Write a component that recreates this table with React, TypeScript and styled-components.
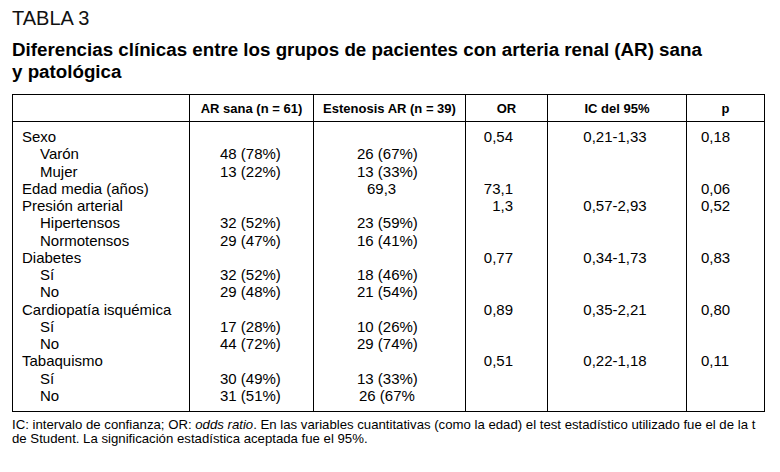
import styled, { createGlobalStyle } from "styled-components";

const GlobalStyle = createGlobalStyle`
  body {
    margin: 0;
    background: #ffffff;
    color: #000;
    font-family: "Liberation Sans", Arial, sans-serif;
  }
`;

const PageStyle = styled.div`
  width: 752px;
  padding: 6px 12px 0 12px;
`;

const TableLabel = styled.div`
  font-size: 20px;
  line-height: 24px;
  color: #111;
`;

const Heading = styled.h2`
  margin: 9px 0 0 0;
  font-size: 18.75px;
  line-height: 22px;
  font-weight: bold;
`;

const TableStyle = styled.table`
  margin-top: 11px;
  border-collapse: collapse;
  table-layout: fixed;
  width: 753px;
`;

const HeadCell = styled.th`
  border: 1px solid #000;
  height: 26px;
  padding: 0;
  font-size: 13px;
  font-weight: bold;
  text-align: center;
  vertical-align: middle;
`;

const BodyCell = styled.td<{ $align?: string; $padL?: number; $padR?: number }>`
  border: 1px solid #000;
  padding: 6px ${(p) => p.$padR ?? 0}px 7px ${(p) => p.$padL ?? 0}px;
  vertical-align: top;
  text-align: ${(p) => p.$align ?? "left"};
  font-size: 15px;
`;

const Line = styled.div<{ $indent?: number }>`
  height: 17.27px;
  line-height: 17.27px;
  padding-left: ${(p) => p.$indent ?? 0}px;
  white-space: nowrap;
`;

const Footnote = styled.div`
  margin-top: 6px;
  font-size: 13.2px;
  line-height: 14px;
  white-space: nowrap;

  em {
    font-style: italic;
  }
`;

type TLine = { text: string; indent?: number };

const rows: TLine[] = [
  { text: "Sexo" },
  { text: "Varón", indent: 18 },
  { text: "Mujer", indent: 18 },
  { text: "Edad media (años)" },
  { text: "Presión arterial" },
  { text: "Hipertensos", indent: 18 },
  { text: "Normotensos", indent: 18 },
  { text: "Diabetes" },
  { text: "Sí", indent: 18 },
  { text: "No", indent: 18 },
  { text: "Cardiopatía isquémica" },
  { text: "Sí", indent: 18 },
  { text: "No", indent: 18 },
  { text: "Tabaquismo" },
  { text: "Sí", indent: 18 },
  { text: "No", indent: 18 },
];

const sana = ["", "48 (78%)", "13 (22%)", "", "", "32 (52%)", "29 (47%)", "", "32 (52%)", "29 (48%)", "", "17 (28%)", "44 (72%)", "", "30 (49%)", "31 (51%)"];
const estenosis: TLine[] = [
  { text: "" }, { text: "26 (67%)" }, { text: "13 (33%)" }, { text: "69,3", indent: 10 }, { text: "" },
  { text: "23 (59%)" }, { text: "16 (41%)" }, { text: "" }, { text: "18 (46%)" }, { text: "21 (54%)" },
  { text: "" }, { text: "10 (26%)" }, { text: "29 (74%)" }, { text: "" }, { text: "13 (33%)" },
  { text: "26 (67%", indent: 2 },
];
const or = ["0,54", "", "", "73,1", "1,3", "", "", "0,77", "", "", "0,89", "", "", "0,51", "", ""];
const ic = ["0,21-1,33", "", "", "", "0,57-2,93", "", "", "0,34-1,73", "", "", "0,35-2,21", "", "", "0,22-1,18", "", ""];
const pval = ["0,18", "", "", "0,06", "0,52", "", "", "0,83", "", "", "0,80", "", "", "0,11", "", ""];

// lineas vacias se dejan con nbsp para que mantengan la altura
const lines = (arr: (string | TLine)[]) =>
  arr.map((el, i) => {
    const l = typeof el === "string" ? { text: el } : el;
    return (
      <Line key={i} $indent={l.indent}>
        {l.text || "\u00a0"}
      </Line>
    );
  });

export default function App() {
  return (
    <PageStyle>
      <GlobalStyle />
      <TableLabel>TABLA 3</TableLabel>
      <Heading>
        Diferencias clínicas entre los grupos de pacientes con arteria renal (AR) sana
        <br />y patológica
      </Heading>

      <TableStyle>
        <colgroup>
          <col style={{ width: 177 }} />
          <col style={{ width: 124 }} />
          <col style={{ width: 152 }} />
          <col style={{ width: 82 }} />
          <col style={{ width: 139 }} />
          <col style={{ width: 78 }} />
        </colgroup>
        <thead>
          <tr>
            <HeadCell />
            <HeadCell>AR sana (n = 61)</HeadCell>
            <HeadCell>Estenosis AR (n = 39)</HeadCell>
            <HeadCell>OR</HeadCell>
            <HeadCell>IC del 95%</HeadCell>
            <HeadCell>p</HeadCell>
          </tr>
        </thead>
        <tbody>
          <tr>
            <BodyCell $padL={9}>{lines(rows)}</BodyCell>
            <BodyCell $padL={30}>{lines(sana)}</BodyCell>
            <BodyCell $padL={43}>{lines(estenosis)}</BodyCell>
            <BodyCell $align="right" $padR={34}>{lines(or)}</BodyCell>
            <BodyCell $align="center" $padR={4}>{lines(ic)}</BodyCell>
            <BodyCell $padL={14}>{lines(pval)}</BodyCell>
          </tr>
        </tbody>
      </TableStyle>

      <Footnote>
        IC: intervalo de confianza; OR: <em>odds ratio</em>. En las variables cuantitativas (como la edad) el test
        estadístico utilizado fue el de la t
        <br />
        de Student. La significación estadística aceptada fue el 95%.
      </Footnote>
    </PageStyle>
  );
}
